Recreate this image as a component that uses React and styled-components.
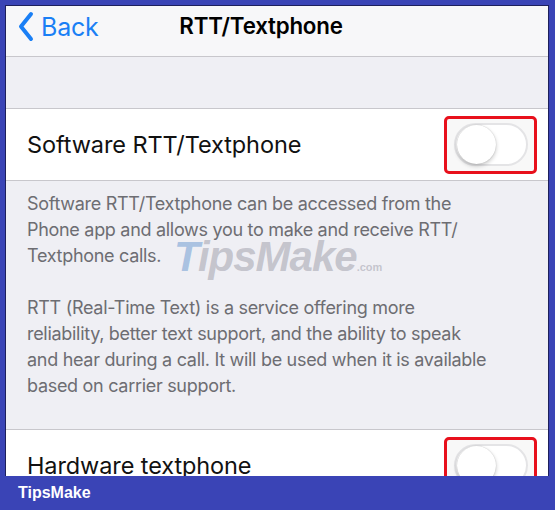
import React from "react"
import styled, { createGlobalStyle } from "styled-components"

const GlobalStyle = createGlobalStyle`
  html, body {
    margin: 0;
    padding: 0;
    background: #3a44b6;
    font-family: Inter, "Liberation Sans", sans-serif;
  }
`

const Frame = styled.div`
  width: 555px;
  height: 510px;
  display: flex;
  flex-direction: column;
  background: #3a44b6;
`

const Screen = styled.div`
  height: 470px;
  margin: 5px 6px 0 5px;
  border-left: 1px solid #1d1f5c;
  border-right: 1px solid #1d1f5c;
  border-top: 1px solid #1d1f5c;
  background: #efeff4;
  overflow: hidden;
  display: flex;
  flex-direction: column;
`

const NavBar = styled.div`
  height: 51px;
  flex-shrink: 0;
  box-sizing: border-box;
  padding: 5px 32px 0 0;
  background: #f7f7f9;
  border-bottom: 1px solid #c8c7cc;
  display: grid;
  grid-template-columns: 1fr auto 1fr;
  align-items: start;
`

const BackButton = styled.div`
  display: flex;
  align-items: center;
  gap: 7px;
  padding-left: 12px;
  color: #1a7ff5;
  font-size: 25px;
  line-height: 30px;
  letter-spacing: -0.2px;
`

const Title = styled.div`
  font-size: 22.3px;
  line-height: 30px;
  font-weight: 600;
  color: #000;
  letter-spacing: -0.2px;
`

const Spacer = styled.div`
  height: 51px;
  flex-shrink: 0;
  border-bottom: 1px solid #c8c7cc;
`

const Row = styled.div`
  height: 71px;
  flex-shrink: 0;
  background: #fff;
  border-bottom: 1px solid #c8c7cc;
  display: flex;
  align-items: center;
  justify-content: space-between;
  padding: 0 11px 0 21px;
`

const Label = styled.div`
  font-size: 23.5px;
  color: #111;
  letter-spacing: -0.1px;
`

const Highlight = styled.div`
  width: 87px;
  height: 52px;
  border: 3px solid #e8101c;
  border-radius: 5px;
  display: flex;
  align-items: center;
  justify-content: center;
  background: #f8f8f8;
`

const Switch = styled.div`
  width: 74px;
  height: 43px;
  box-sizing: border-box;
  border-radius: 22px;
  border: 2px solid #e4e4e6;
  background: #fff;
  position: relative;
`

const Knob = styled.div`
  position: absolute;
  left: 1px;
  top: 0px;
  width: 39px;
  height: 39px;
  border-radius: 50%;
  background: #fff;
  box-shadow: 0 2px 4px rgba(0, 0, 0, 0.22), 0 0 1px rgba(0, 0, 0, 0.25);
`

const Footer = styled.div`
  height: 249px;
  flex-shrink: 0;
  border-bottom: 1px solid #c8c7cc;
  padding: 10px 56px 0 21px;
  box-sizing: border-box;
  color: #6d6d72;
  font-size: 18px;
  line-height: 26px;
  letter-spacing: -0.3px;
  position: relative;
`

const Para = styled.p`
  margin: 0 0 26px;
`

const Watermark = styled.div`
  position: absolute;
  left: 168px;
  top: 51px;
  font-family: "Liberation Sans", Arial, sans-serif;
  font-weight: 700;
  font-style: italic;
  font-size: 42px;
  line-height: 50px;
  letter-spacing: -1px;
  color: rgba(160, 160, 172, 0.55);
  pointer-events: none;

  span {
    color: rgba(110, 155, 210, 0.55);
  }

  small {
    font-size: 11px;
    font-style: normal;
    letter-spacing: 0;
  }
`

const BrandBar = styled.div`
  flex: 1;
  display: flex;
  align-items: center;
  padding-left: 18px;
  color: #fff;
  font-family: "Liberation Sans", Arial, sans-serif;
  font-weight: 700;
  font-size: 16px;
`

const Toggle = () => (
  <Highlight>
    <Switch>
      <Knob />
    </Switch>
  </Highlight>
)

export default function App() {
  return (
    <Frame>
      <GlobalStyle />
      <Screen>
        <NavBar>
          <BackButton>
            <svg width="16" height="31" viewBox="0 0 16 31">
              <path d="M13 3 L3 15.5 L13 28" fill="none" stroke="#1a7ff5" strokeWidth="4" strokeLinecap="round" strokeLinejoin="round" />
            </svg>
            Back
          </BackButton>
          <Title>RTT/Textphone</Title>
          <div />
        </NavBar>
        <Spacer />
        <Row>
          <Label>Software RTT/Textphone</Label>
          <Toggle />
        </Row>
        <Footer>
          <Para>
            Software RTT/Textphone can be accessed from the Phone app and allows you to make and receive RTT/
            Textphone calls.
          </Para>
          <Para>
            RTT (Real-Time Text) is a service offering more reliability, better text support, and the ability to speak
            and hear during a call. It will be used when it is available based on carrier support.
          </Para>
          <Watermark>
            <span>T</span>ipsMake<small>.com</small>
          </Watermark>
        </Footer>
        <Row>
          <Label>Hardware textphone</Label>
          <Toggle />
        </Row>
      </Screen>
      <BrandBar>TipsMake</BrandBar>
    </Frame>
  )
}
